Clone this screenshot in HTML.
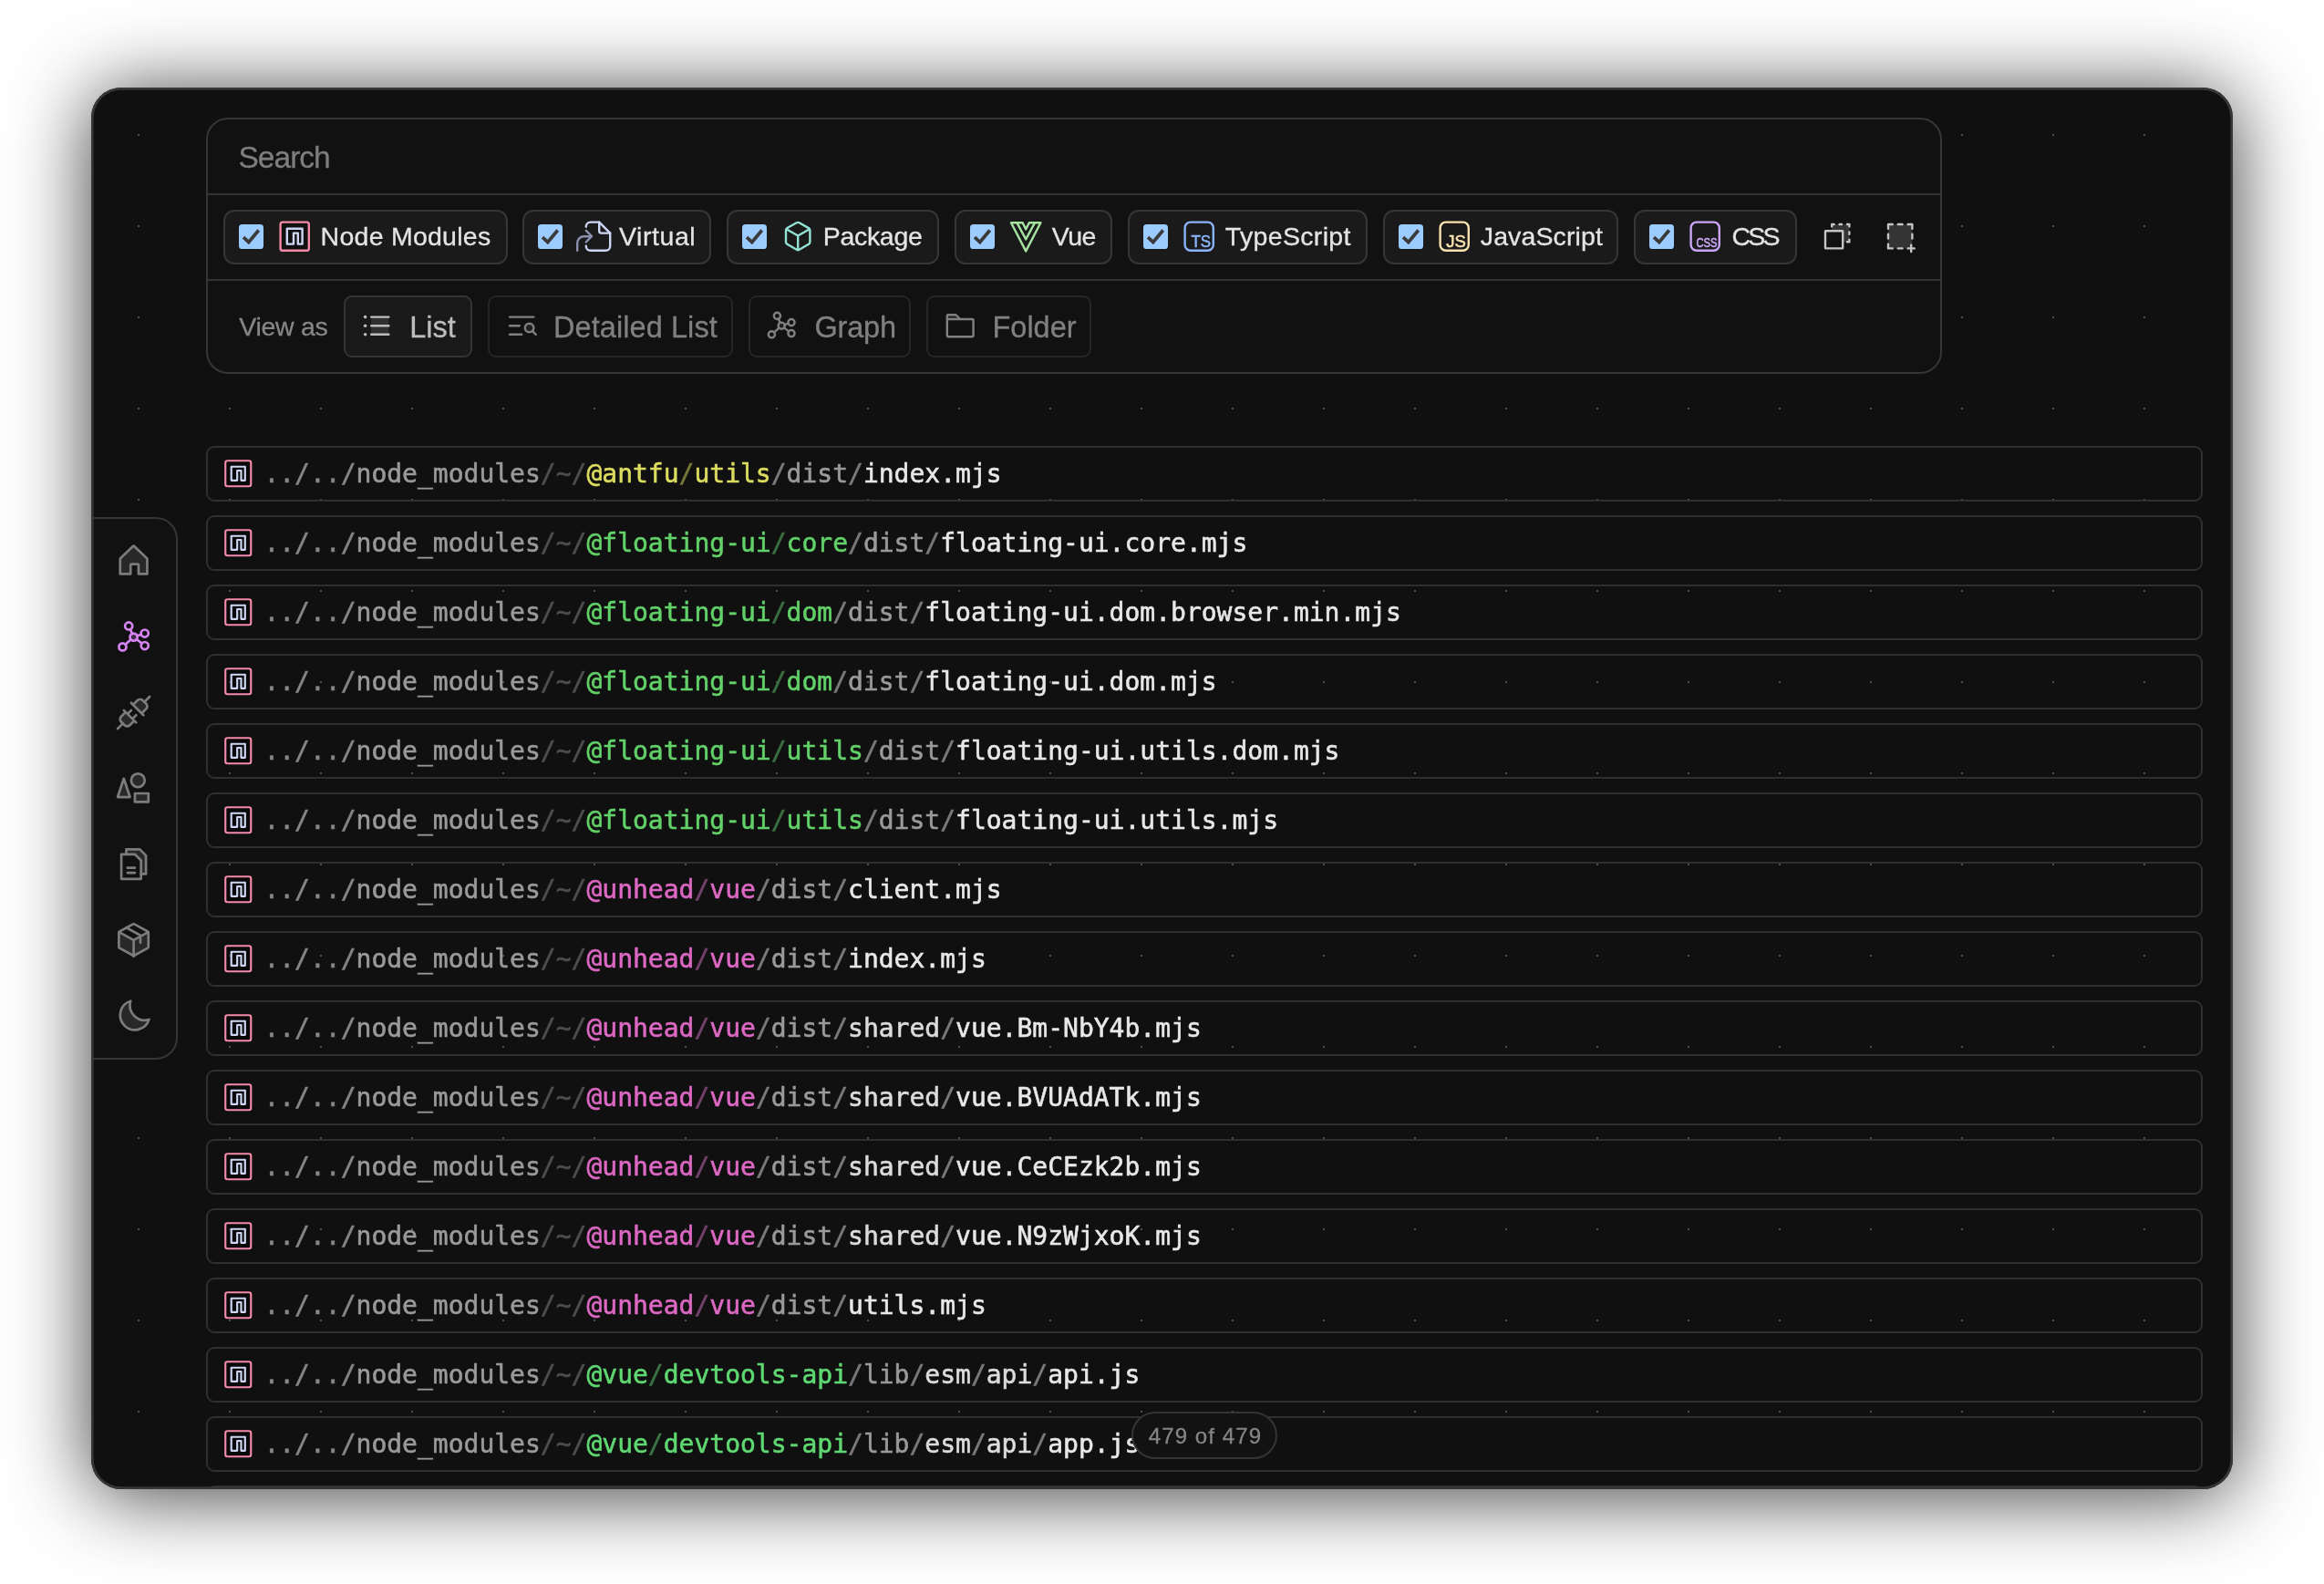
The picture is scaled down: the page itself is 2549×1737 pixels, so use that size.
<!DOCTYPE html>
<html lang="en"><head><meta charset="utf-8"><title>Vite DevTools - Modules</title>
<style>
*{box-sizing:border-box;margin:0;padding:0}
html,body{width:2549px;height:1737px;background:#fff}
body{overflow:hidden}
body{position:relative;font-family:"Liberation Sans",sans-serif;color:#d4d4d4}
.abs,.win>*,.abs>*{position:absolute}
.win{position:absolute;left:100px;top:96px;width:2349px;height:1537px;border-radius:33px;background:#101010;
 box-shadow:0 6px 88px rgba(0,0,0,.78);overflow:hidden;will-change:transform}
.winb{position:absolute;left:100px;top:96px;width:2349px;height:1537px;border-radius:33px;box-shadow:inset 0 0 0 2.7px #363636;pointer-events:none}
.dots{left:0;top:0}
.row{left:126px;width:2190px;height:61px;border:2px solid #2f2f2f;border-radius:9px}
.mono{font-family:"DejaVu Sans Mono","Liberation Mono",monospace;font-size:28px;line-height:40px;white-space:pre;letter-spacing:0}
.t{position:absolute;white-space:pre;-webkit-text-stroke:.3px}
.t.mono{-webkit-text-stroke:.55px}
.ic{position:absolute;display:block;overflow:visible}
.c1{color:#868686}.c2{color:#9a9a9a}.c3{color:#4e4e4e}.c4{color:#7a7a7a}.cw{color:#e8e8e8}.cs{color:#dcdcdc}
.py{color:#dcdc60}.pyd{color:#77773a}
.pg{color:#62d169}.pgd{color:#3a7040}
.pp{color:#dd68c4}.ppd{color:#75406a}
.pv{color:#5fd872}.pvd{color:#3a7444}
.panel{left:126px;top:33px;width:1904px;height:281px;border:2px solid #363636;border-radius:24px;background:#111111}
.hr{left:128px;width:1900px;height:2px;background:#323232}
.chip{top:134px;height:60px;border:2px solid #363636;border-radius:12px;background:#1a1a1a}
.cb{width:27px;height:27px;border-radius:3.6px;background:#9ccbff}
.lbl{font-size:28.5px;line-height:40px;color:#e6e6e6}
.vb{top:228px;height:68px;border:2px solid #262626;border-radius:9px}
.vb.on{border-color:#343434;background:#191919}
.vt{font-size:32px;line-height:44px;color:#858585}
.side{left:-2px;top:471px;width:97px;height:595px;border:2px solid #363636;border-radius:0 24px 24px 0;background:#111111}
.pill{left:1141px;top:1451.5px;width:160px;height:52px;border:2px solid #343434;border-radius:26px;background:#121212}
</style></head><body>
<div class="win">

<svg class="dots" width="2349" height="1537"><defs><pattern id="dp" x="51" y="51" width="100" height="100" patternUnits="userSpaceOnUse"><rect width="2" height="2" fill="#505050"/></pattern></defs><rect width="2349" height="1537" fill="url(#dp)"/></svg>
<div class="row" style="top:1533px"></div>
<div class="row" style="top:393px">
<svg class="ic" style="left:16.1px;top:11.2px" width="34.5" height="34.5" viewBox="0 0 16 16" fill="none" stroke-linecap="round" stroke-linejoin="round"><rect x="1.5" y="1.5" width="13" height="13" rx="1" stroke="#f38ba8" fill="#000" fill-opacity=".4"/><path stroke="#cdd6f4" d="M4.5 11.5v-7h7v7h-2v-5h-2v5z"/></svg>
<div class="t mono" style="left:61.4px;top:8.6px"><span class="c1">../../</span><span class="c2">node_modules</span><span class="c3">/~/</span><span class="py">@antfu</span><span class="pyd">/</span><span class="py">utils</span><span class="c4">/</span><span class="c2">dist</span><span class="c4">/</span><span class="cw">index.mjs</span></div>
</div>
<div class="row" style="top:469px">
<svg class="ic" style="left:16.1px;top:11.2px" width="34.5" height="34.5" viewBox="0 0 16 16" fill="none" stroke-linecap="round" stroke-linejoin="round"><rect x="1.5" y="1.5" width="13" height="13" rx="1" stroke="#f38ba8" fill="#000" fill-opacity=".4"/><path stroke="#cdd6f4" d="M4.5 11.5v-7h7v7h-2v-5h-2v5z"/></svg>
<div class="t mono" style="left:61.4px;top:8.6px"><span class="c1">../../</span><span class="c2">node_modules</span><span class="c3">/~/</span><span class="pg">@floating-ui</span><span class="pgd">/</span><span class="pg">core</span><span class="c4">/</span><span class="c2">dist</span><span class="c4">/</span><span class="cw">floating-ui.core.mjs</span></div>
</div>
<div class="row" style="top:545px">
<svg class="ic" style="left:16.1px;top:11.2px" width="34.5" height="34.5" viewBox="0 0 16 16" fill="none" stroke-linecap="round" stroke-linejoin="round"><rect x="1.5" y="1.5" width="13" height="13" rx="1" stroke="#f38ba8" fill="#000" fill-opacity=".4"/><path stroke="#cdd6f4" d="M4.5 11.5v-7h7v7h-2v-5h-2v5z"/></svg>
<div class="t mono" style="left:61.4px;top:8.6px"><span class="c1">../../</span><span class="c2">node_modules</span><span class="c3">/~/</span><span class="pg">@floating-ui</span><span class="pgd">/</span><span class="pg">dom</span><span class="c4">/</span><span class="c2">dist</span><span class="c4">/</span><span class="cw">floating-ui.dom.browser.min.mjs</span></div>
</div>
<div class="row" style="top:621px">
<svg class="ic" style="left:16.1px;top:11.2px" width="34.5" height="34.5" viewBox="0 0 16 16" fill="none" stroke-linecap="round" stroke-linejoin="round"><rect x="1.5" y="1.5" width="13" height="13" rx="1" stroke="#f38ba8" fill="#000" fill-opacity=".4"/><path stroke="#cdd6f4" d="M4.5 11.5v-7h7v7h-2v-5h-2v5z"/></svg>
<div class="t mono" style="left:61.4px;top:8.6px"><span class="c1">../../</span><span class="c2">node_modules</span><span class="c3">/~/</span><span class="pg">@floating-ui</span><span class="pgd">/</span><span class="pg">dom</span><span class="c4">/</span><span class="c2">dist</span><span class="c4">/</span><span class="cw">floating-ui.dom.mjs</span></div>
</div>
<div class="row" style="top:697px">
<svg class="ic" style="left:16.1px;top:11.2px" width="34.5" height="34.5" viewBox="0 0 16 16" fill="none" stroke-linecap="round" stroke-linejoin="round"><rect x="1.5" y="1.5" width="13" height="13" rx="1" stroke="#f38ba8" fill="#000" fill-opacity=".4"/><path stroke="#cdd6f4" d="M4.5 11.5v-7h7v7h-2v-5h-2v5z"/></svg>
<div class="t mono" style="left:61.4px;top:8.6px"><span class="c1">../../</span><span class="c2">node_modules</span><span class="c3">/~/</span><span class="pg">@floating-ui</span><span class="pgd">/</span><span class="pg">utils</span><span class="c4">/</span><span class="c2">dist</span><span class="c4">/</span><span class="cw">floating-ui.utils.dom.mjs</span></div>
</div>
<div class="row" style="top:773px">
<svg class="ic" style="left:16.1px;top:11.2px" width="34.5" height="34.5" viewBox="0 0 16 16" fill="none" stroke-linecap="round" stroke-linejoin="round"><rect x="1.5" y="1.5" width="13" height="13" rx="1" stroke="#f38ba8" fill="#000" fill-opacity=".4"/><path stroke="#cdd6f4" d="M4.5 11.5v-7h7v7h-2v-5h-2v5z"/></svg>
<div class="t mono" style="left:61.4px;top:8.6px"><span class="c1">../../</span><span class="c2">node_modules</span><span class="c3">/~/</span><span class="pg">@floating-ui</span><span class="pgd">/</span><span class="pg">utils</span><span class="c4">/</span><span class="c2">dist</span><span class="c4">/</span><span class="cw">floating-ui.utils.mjs</span></div>
</div>
<div class="row" style="top:849px">
<svg class="ic" style="left:16.1px;top:11.2px" width="34.5" height="34.5" viewBox="0 0 16 16" fill="none" stroke-linecap="round" stroke-linejoin="round"><rect x="1.5" y="1.5" width="13" height="13" rx="1" stroke="#f38ba8" fill="#000" fill-opacity=".4"/><path stroke="#cdd6f4" d="M4.5 11.5v-7h7v7h-2v-5h-2v5z"/></svg>
<div class="t mono" style="left:61.4px;top:8.6px"><span class="c1">../../</span><span class="c2">node_modules</span><span class="c3">/~/</span><span class="pp">@unhead</span><span class="ppd">/</span><span class="pp">vue</span><span class="c4">/</span><span class="c2">dist</span><span class="c4">/</span><span class="cw">client.mjs</span></div>
</div>
<div class="row" style="top:925px">
<svg class="ic" style="left:16.1px;top:11.2px" width="34.5" height="34.5" viewBox="0 0 16 16" fill="none" stroke-linecap="round" stroke-linejoin="round"><rect x="1.5" y="1.5" width="13" height="13" rx="1" stroke="#f38ba8" fill="#000" fill-opacity=".4"/><path stroke="#cdd6f4" d="M4.5 11.5v-7h7v7h-2v-5h-2v5z"/></svg>
<div class="t mono" style="left:61.4px;top:8.6px"><span class="c1">../../</span><span class="c2">node_modules</span><span class="c3">/~/</span><span class="pp">@unhead</span><span class="ppd">/</span><span class="pp">vue</span><span class="c4">/</span><span class="c2">dist</span><span class="c4">/</span><span class="cw">index.mjs</span></div>
</div>
<div class="row" style="top:1001px">
<svg class="ic" style="left:16.1px;top:11.2px" width="34.5" height="34.5" viewBox="0 0 16 16" fill="none" stroke-linecap="round" stroke-linejoin="round"><rect x="1.5" y="1.5" width="13" height="13" rx="1" stroke="#f38ba8" fill="#000" fill-opacity=".4"/><path stroke="#cdd6f4" d="M4.5 11.5v-7h7v7h-2v-5h-2v5z"/></svg>
<div class="t mono" style="left:61.4px;top:8.6px"><span class="c1">../../</span><span class="c2">node_modules</span><span class="c3">/~/</span><span class="pp">@unhead</span><span class="ppd">/</span><span class="pp">vue</span><span class="c4">/</span><span class="c2">dist</span><span class="c4">/</span><span class="cs">shared</span><span class="c4">/</span><span class="cw">vue.Bm-NbY4b.mjs</span></div>
</div>
<div class="row" style="top:1077px">
<svg class="ic" style="left:16.1px;top:11.2px" width="34.5" height="34.5" viewBox="0 0 16 16" fill="none" stroke-linecap="round" stroke-linejoin="round"><rect x="1.5" y="1.5" width="13" height="13" rx="1" stroke="#f38ba8" fill="#000" fill-opacity=".4"/><path stroke="#cdd6f4" d="M4.5 11.5v-7h7v7h-2v-5h-2v5z"/></svg>
<div class="t mono" style="left:61.4px;top:8.6px"><span class="c1">../../</span><span class="c2">node_modules</span><span class="c3">/~/</span><span class="pp">@unhead</span><span class="ppd">/</span><span class="pp">vue</span><span class="c4">/</span><span class="c2">dist</span><span class="c4">/</span><span class="cs">shared</span><span class="c4">/</span><span class="cw">vue.BVUAdATk.mjs</span></div>
</div>
<div class="row" style="top:1153px">
<svg class="ic" style="left:16.1px;top:11.2px" width="34.5" height="34.5" viewBox="0 0 16 16" fill="none" stroke-linecap="round" stroke-linejoin="round"><rect x="1.5" y="1.5" width="13" height="13" rx="1" stroke="#f38ba8" fill="#000" fill-opacity=".4"/><path stroke="#cdd6f4" d="M4.5 11.5v-7h7v7h-2v-5h-2v5z"/></svg>
<div class="t mono" style="left:61.4px;top:8.6px"><span class="c1">../../</span><span class="c2">node_modules</span><span class="c3">/~/</span><span class="pp">@unhead</span><span class="ppd">/</span><span class="pp">vue</span><span class="c4">/</span><span class="c2">dist</span><span class="c4">/</span><span class="cs">shared</span><span class="c4">/</span><span class="cw">vue.CeCEzk2b.mjs</span></div>
</div>
<div class="row" style="top:1229px">
<svg class="ic" style="left:16.1px;top:11.2px" width="34.5" height="34.5" viewBox="0 0 16 16" fill="none" stroke-linecap="round" stroke-linejoin="round"><rect x="1.5" y="1.5" width="13" height="13" rx="1" stroke="#f38ba8" fill="#000" fill-opacity=".4"/><path stroke="#cdd6f4" d="M4.5 11.5v-7h7v7h-2v-5h-2v5z"/></svg>
<div class="t mono" style="left:61.4px;top:8.6px"><span class="c1">../../</span><span class="c2">node_modules</span><span class="c3">/~/</span><span class="pp">@unhead</span><span class="ppd">/</span><span class="pp">vue</span><span class="c4">/</span><span class="c2">dist</span><span class="c4">/</span><span class="cs">shared</span><span class="c4">/</span><span class="cw">vue.N9zWjxoK.mjs</span></div>
</div>
<div class="row" style="top:1305px">
<svg class="ic" style="left:16.1px;top:11.2px" width="34.5" height="34.5" viewBox="0 0 16 16" fill="none" stroke-linecap="round" stroke-linejoin="round"><rect x="1.5" y="1.5" width="13" height="13" rx="1" stroke="#f38ba8" fill="#000" fill-opacity=".4"/><path stroke="#cdd6f4" d="M4.5 11.5v-7h7v7h-2v-5h-2v5z"/></svg>
<div class="t mono" style="left:61.4px;top:8.6px"><span class="c1">../../</span><span class="c2">node_modules</span><span class="c3">/~/</span><span class="pp">@unhead</span><span class="ppd">/</span><span class="pp">vue</span><span class="c4">/</span><span class="c2">dist</span><span class="c4">/</span><span class="cw">utils.mjs</span></div>
</div>
<div class="row" style="top:1381px">
<svg class="ic" style="left:16.1px;top:11.2px" width="34.5" height="34.5" viewBox="0 0 16 16" fill="none" stroke-linecap="round" stroke-linejoin="round"><rect x="1.5" y="1.5" width="13" height="13" rx="1" stroke="#f38ba8" fill="#000" fill-opacity=".4"/><path stroke="#cdd6f4" d="M4.5 11.5v-7h7v7h-2v-5h-2v5z"/></svg>
<div class="t mono" style="left:61.4px;top:8.6px"><span class="c1">../../</span><span class="c2">node_modules</span><span class="c3">/~/</span><span class="pv">@vue</span><span class="pvd">/</span><span class="pv">devtools-api</span><span class="c4">/</span><span class="c2">lib</span><span class="c4">/</span><span class="cs">esm</span><span class="c4">/</span><span class="cs">api</span><span class="c4">/</span><span class="cw">api.js</span></div>
</div>
<div class="row" style="top:1457px">
<svg class="ic" style="left:16.1px;top:11.2px" width="34.5" height="34.5" viewBox="0 0 16 16" fill="none" stroke-linecap="round" stroke-linejoin="round"><rect x="1.5" y="1.5" width="13" height="13" rx="1" stroke="#f38ba8" fill="#000" fill-opacity=".4"/><path stroke="#cdd6f4" d="M4.5 11.5v-7h7v7h-2v-5h-2v5z"/></svg>
<div class="t mono" style="left:61.4px;top:8.6px"><span class="c1">../../</span><span class="c2">node_modules</span><span class="c3">/~/</span><span class="pv">@vue</span><span class="pvd">/</span><span class="pv">devtools-api</span><span class="c4">/</span><span class="c2">lib</span><span class="c4">/</span><span class="cs">esm</span><span class="c4">/</span><span class="cs">api</span><span class="c4">/</span><span class="cw">app.js</span></div>
</div>
<div class="panel"></div>
<div class="hr" style="top:116px"></div><div class="hr" style="top:210px"></div>
<div class="t" style="left:161.50px;top:52.79px;font-size:33.5px;line-height:47px;letter-spacing:-0.979px;color:#7e7e7e">Search</div>
<div class="chip" style="left:145.0px;width:311.5px"></div>
<div class="cb" style="left:162.30px;top:150.20px"><svg width="27" height="27" viewBox="0 0 27 27" style="position:absolute;left:0;top:0"><path d="M5 14.200 10.800 19.500 21.700 6.500" fill="none" stroke="#3a3a3a" stroke-width="3.7" stroke-linejoin="miter"/></svg></div>
<svg class="ic" style="left:204.30px;top:144.40px" width="38.4" height="38.4" viewBox="0 0 16 16" fill="none" stroke-linecap="round" stroke-linejoin="round" ><rect x="1.5" y="1.5" width="13" height="13" rx="1" stroke="#f38ba8" fill="#000" fill-opacity=".35"/><path stroke="#cdd6f4" d="M4.5 11.5v-7h7v7h-2v-5h-2v5z"/></svg>
<div class="t" style="left:251.60px;top:142.82px;font-size:28.5px;line-height:40px;letter-spacing:0.252px;color:#e4e4e4">Node Modules</div>
<div class="chip" style="left:472.6px;width:207.6px"></div>
<div class="cb" style="left:489.90px;top:150.20px"><svg width="27" height="27" viewBox="0 0 27 27" style="position:absolute;left:0;top:0"><path d="M5 14.200 10.800 19.500 21.700 6.500" fill="none" stroke="#3a3a3a" stroke-width="3.7" stroke-linejoin="miter"/></svg></div>
<svg class="ic" style="left:531.90px;top:144.40px" width="38.4" height="38.4" viewBox="0 0 16 16" fill="none" stroke-linecap="round" stroke-linejoin="round" ><path stroke="#cdd6f4" d="M4.5 3.6v-.1a2 2 0 0 1 2-2h4l5 5v6a2 2 0 0 1-2 2h-7a2 2 0 0 1-2-2v-.1"/><path stroke="#cdd6f4" d="M10.5 1.5v4a1 1 0 0 0 1 1h4"/><path stroke="#8a90ad" d="M.5 14.5v-3.5a3 3 0 0 1 3-3h3.4M4.5 5.4 7.1 8 4.5 10.6"/></svg>
<div class="t" style="left:579.00px;top:142.82px;font-size:28.5px;line-height:40px;letter-spacing:0.562px;color:#e4e4e4">Virtual</div>
<div class="chip" style="left:696.8px;width:233.4px"></div>
<div class="cb" style="left:714.10px;top:150.20px"><svg width="27" height="27" viewBox="0 0 27 27" style="position:absolute;left:0;top:0"><path d="M5 14.200 10.800 19.500 21.700 6.500" fill="none" stroke="#3a3a3a" stroke-width="3.7" stroke-linejoin="miter"/></svg></div>
<svg class="ic" style="left:756.10px;top:144.40px" width="38.4" height="38.4" viewBox="0 0 16 16" fill="none" stroke-linecap="round" stroke-linejoin="round" ><path stroke="#94e2d5" d="M7.4 1.8a1.2 1.2 0 0 1 1.2 0l4.3 2.4a1.2 1.2 0 0 1 .6 1v5.4a1.2 1.2 0 0 1-.6 1l-4.3 2.5a1.2 1.2 0 0 1-1.2 0l-4.3-2.5a1.2 1.2 0 0 1-.6-1V5.2a1.2 1.2 0 0 1 .6-1zM2.7 4.7 8 7.7l5.3-3M8 7.7v6.5"/></svg>
<div class="t" style="left:802.70px;top:142.82px;font-size:28.5px;line-height:40px;letter-spacing:-0.294px;color:#e4e4e4">Package</div>
<div class="chip" style="left:946.9px;width:173.6px"></div>
<div class="cb" style="left:964.20px;top:150.20px"><svg width="27" height="27" viewBox="0 0 27 27" style="position:absolute;left:0;top:0"><path d="M5 14.200 10.800 19.500 21.700 6.500" fill="none" stroke="#3a3a3a" stroke-width="3.7" stroke-linejoin="miter"/></svg></div>
<svg class="ic" style="left:1006.20px;top:144.40px" width="38.4" height="38.4" viewBox="0 0 16 16" fill="none" stroke-linecap="round" stroke-linejoin="round" ><path stroke="#a6e3a1" d="M1.25 1.75H6.5L8 4.75l1.5-3h5.25L8 14.75z"/><path stroke="#a6e3a1" d="M4 1.95 8 9.35l4-7.4"/></svg>
<div class="t" style="left:1053.80px;top:142.82px;font-size:28.5px;line-height:40px;letter-spacing:-0.495px;color:#e4e4e4">Vue</div>
<div class="chip" style="left:1136.9px;width:263.3px"></div>
<div class="cb" style="left:1154.20px;top:150.20px"><svg width="27" height="27" viewBox="0 0 27 27" style="position:absolute;left:0;top:0"><path d="M5 14.200 10.800 19.500 21.700 6.500" fill="none" stroke="#3a3a3a" stroke-width="3.7" stroke-linejoin="miter"/></svg></div>
<svg class="ic" style="left:1196.20px;top:144.40px" width="38.4" height="38.4" viewBox="0 0 16 16" fill="none" stroke-linecap="round" stroke-linejoin="round" ><rect x="1.5" y="1.5" width="13" height="13" rx="2.6" stroke="#89b4fa"/><text x="8.85" y="12.85" text-anchor="middle" font-family="Liberation Sans, sans-serif" font-size="7.9" textLength="9.0" lengthAdjust="spacingAndGlyphs" fill="#89b4fa" stroke="#89b4fa" stroke-width=".25">TS</text></svg>
<div class="t" style="left:1243.80px;top:142.82px;font-size:28.5px;line-height:40px;letter-spacing:0.338px;color:#e4e4e4">TypeScript</div>
<div class="chip" style="left:1416.9px;width:258.6px"></div>
<div class="cb" style="left:1434.20px;top:150.20px"><svg width="27" height="27" viewBox="0 0 27 27" style="position:absolute;left:0;top:0"><path d="M5 14.200 10.800 19.500 21.700 6.500" fill="none" stroke="#3a3a3a" stroke-width="3.7" stroke-linejoin="miter"/></svg></div>
<svg class="ic" style="left:1476.20px;top:144.40px" width="38.4" height="38.4" viewBox="0 0 16 16" fill="none" stroke-linecap="round" stroke-linejoin="round" ><rect x="1.5" y="1.5" width="13" height="13" rx="2.6" stroke="#f9e2af"/><text x="8.75" y="12.85" text-anchor="middle" font-family="Liberation Sans, sans-serif" font-size="7.9" textLength="9.0" lengthAdjust="spacingAndGlyphs" fill="#f9e2af" stroke="#f9e2af" stroke-width=".25">JS</text></svg>
<div class="t" style="left:1523.80px;top:142.82px;font-size:28.5px;line-height:40px;letter-spacing:0.112px;color:#e4e4e4">JavaScript</div>
<div class="chip" style="left:1691.6px;width:179.7px"></div>
<div class="cb" style="left:1708.90px;top:150.20px"><svg width="27" height="27" viewBox="0 0 27 27" style="position:absolute;left:0;top:0"><path d="M5 14.200 10.800 19.500 21.700 6.500" fill="none" stroke="#3a3a3a" stroke-width="3.7" stroke-linejoin="miter"/></svg></div>
<svg class="ic" style="left:1750.90px;top:144.40px" width="38.4" height="38.4" viewBox="0 0 16 16" fill="none" stroke-linecap="round" stroke-linejoin="round" ><rect x="1.5" y="1.5" width="13" height="13" rx="2.6" stroke="#cba6f7"/><text x="8.75" y="12.85" text-anchor="middle" font-family="Liberation Sans, sans-serif" font-size="6.4" textLength="9.6" lengthAdjust="spacingAndGlyphs" fill="#cba6f7" stroke="#cba6f7" stroke-width=".25">CSS</text></svg>
<div class="t" style="left:1799.40px;top:142.82px;font-size:28.5px;line-height:40px;letter-spacing:-2.684px;color:#e4e4e4">CSS</div>
<svg class="ic" style="left:1895.50px;top:144.40px" width="38.4" height="38.4" viewBox="0 0 256 256" fill="none" stroke-linecap="round" stroke-linejoin="round" ><rect fill="#c4c4c4" fill-opacity="0.2" stroke="none" x="88" y="40" width="128" height="128"/><g stroke="#c4c4c4" stroke-width="16"><rect x="40" y="88" width="128" height="128" rx="2" fill="#111"/><path d="M144 40h16M200 40h16v16M216 96v16M216 152v16h-16M88 56V40h16"/></g></svg>
<svg class="ic" style="left:1965.20px;top:144.40px" width="38.4" height="38.4" viewBox="0 0 256 256" fill="none" stroke-linecap="round" stroke-linejoin="round" ><rect fill="#c4c4c4" fill-opacity="0.2" stroke="none" x="40" y="40" width="176" height="176"/><g stroke="#c4c4c4" stroke-width="16"><path d="M144 40h-32M72 40H40v32M40 144v-32M72 216H40v-32M144 216h-32M216 72V40h-32M216 144v-32M184 216h48M208 192v48"/></g></svg>
<div class="t" style="left:162.30px;top:241.92px;font-size:28.5px;line-height:40px;letter-spacing:-0.304px;color:#868686">View as</div>
<div class="vb on" style="left:277.0px;width:141.4px"></div>
<svg class="ic" style="left:294.40px;top:242.30px" width="38.4" height="38.4" viewBox="0 0 256 256" fill="none" stroke-linecap="round" stroke-linejoin="round" ><rect fill="#bdbdbd" fill-opacity="0.14" stroke="none" x="88" y="64" width="128" height="128"/><g stroke="#bdbdbd" stroke-width="16"><path d="M88 64h128M88 128h128M88 192h128"/></g><g fill="#bdbdbd" stroke="none"><circle cx="44" cy="64" r="12"/><circle cx="44" cy="128" r="12"/><circle cx="44" cy="192" r="12"/></g></svg>
<div class="t" style="left:349.20px;top:239.74px;font-size:32.5px;line-height:46px;letter-spacing:-0.013px;color:#bdbdbd">List</div>
<div class="vb" style="left:435.1px;width:268.9px"></div>
<svg class="ic" style="left:452.50px;top:242.30px" width="38.4" height="38.4" viewBox="0 0 256 256" fill="none" stroke-linecap="round" stroke-linejoin="round" ><circle fill="#808080" fill-opacity="0.14" stroke="none" cx="184" cy="144" r="32"/><g stroke="#808080" stroke-width="16"><path d="M40 64h176M40 128h72M40 192h88"/><circle cx="184" cy="144" r="32"/><path d="M207 167l25 25"/></g></svg>
<div class="t" style="left:507.00px;top:239.74px;font-size:32.5px;line-height:46px;letter-spacing:0.074px;color:#808080">Detailed List</div>
<div class="vb" style="left:720.8px;width:178.2px"></div>
<svg class="ic" style="left:738.20px;top:242.30px" width="38.4" height="38.4" viewBox="0 0 256 256" fill="none" stroke-linecap="round" stroke-linejoin="round" ><circle fill="#808080" fill-opacity="0.14" stroke="none" cx="128" cy="128" r="24"/><g stroke="#808080" stroke-width="16"><circle cx="128" cy="128" r="24"/><circle cx="96" cy="56" r="24"/><circle cx="200" cy="104" r="24"/><circle cx="200" cy="184" r="24"/><circle cx="56" cy="192" r="24"/><path d="M118.250 106.070 105.750 77.930M150.770 120.410 177.230 111.590M146.940 142.740 181.060 169.260M110.060 143.940 73.940 176.060"/></g></svg>
<div class="t" style="left:793.50px;top:239.74px;font-size:32.5px;line-height:46px;letter-spacing:-0.213px;color:#808080">Graph</div>
<div class="vb" style="left:916.2px;width:180.8px"></div>
<svg class="ic" style="left:933.60px;top:242.30px" width="38.4" height="38.4" viewBox="0 0 256 256" fill="none" stroke-linecap="round" stroke-linejoin="round" ><path fill="#808080" fill-opacity="0.14" stroke="none" d="M128 80 100 52a8 8 0 0 0-5-2H40a8 8 0 0 0-8 8v22z"/><g stroke="#808080" stroke-width="16"><path d="M224 88v112a8 8 0 0 1-8 8H40a8 8 0 0 1-8-8V56a8 8 0 0 1 8-8h53a8 8 0 0 1 5 2l30 30h88a8 8 0 0 1 8 8zM32 80h96"/></g></svg>
<div class="t" style="left:988.50px;top:239.74px;font-size:32.5px;line-height:46px;letter-spacing:-0.008px;color:#808080">Folder</div>
<div class="side"></div>
<svg class="ic" style="left:25.20px;top:497.30px" width="43.2" height="43.2" viewBox="0 0 256 256" fill="none" stroke-linecap="round" stroke-linejoin="round" ><path fill="#7c7c7c" fill-opacity="0.22" stroke="none" d="M40 216V116l88-84 88 84v100h-64v-64h-48v64z"/><path stroke="#7c7c7c" stroke-width="16" d="M40 216V118a6 6 0 0 1 2-4.500l82-78a6 6 0 0 1 8 0l82 78a6 6 0 0 1 2 4.500V216h-56v-58a6 6 0 0 0-6-6h-40a6 6 0 0 0-6 6v58z"/></svg>
<svg class="ic" style="left:25.20px;top:580.50px" width="43.2" height="43.2" viewBox="0 0 256 256" fill="none" stroke-linecap="round" stroke-linejoin="round" ><circle fill="#d683f2" fill-opacity="0.22" stroke="none" cx="128" cy="128" r="24"/><g stroke="#d683f2" stroke-width="16"><circle cx="128" cy="128" r="24"/><circle cx="96" cy="56" r="24"/><circle cx="200" cy="104" r="24"/><circle cx="200" cy="184" r="24"/><circle cx="56" cy="192" r="24"/><path d="M118.250 106.070 105.750 77.930M150.770 120.410 177.230 111.590M146.940 142.740 181.060 169.260M110.060 143.940 73.940 176.060"/></g></svg>
<svg class="ic" style="left:25.20px;top:663.70px" width="43.2" height="43.2" viewBox="0 0 256 256" fill="none" stroke-linecap="round" stroke-linejoin="round" ><path fill="#7c7c7c" fill-opacity="0.22" stroke="none" d="M129.7 70.3 153 47A24 24 0 0 1 187 47L209 69A24 24 0 0 1 209 103L185.7 126.3zM126.300 185.700 103 209A24 24 0 0 1 69 209L47 187A24 24 0 0 1 47 153L70.300 129.700z"/><g stroke="#7c7c7c" stroke-width="16"><path d="M129.7 70.3 153 47A24 24 0 0 1 187 47L209 69A24 24 0 0 1 209 103L185.7 126.3M126.300 185.700 103 209A24 24 0 0 1 69 209L47 187A24 24 0 0 1 47 153L70.300 129.700"/><path d="M112 64l80 80M64 112l80 80M232 24l-34 34M24 232l34-34M144 144l-24 24M112 112l-24 24"/></g></svg>
<svg class="ic" style="left:25.20px;top:746.90px" width="43.2" height="43.2" viewBox="0 0 256 256" fill="none" stroke-linecap="round" stroke-linejoin="round" ><path fill="#7c7c7c" fill-opacity="0.22" stroke="none" d="M64 64 24 184h80z"/><circle fill="#7c7c7c" fill-opacity="0.22" stroke="none" cx="156" cy="76" r="44"/><rect fill="#7c7c7c" fill-opacity="0.22" stroke="none" x="136" y="160" width="88" height="56"/><g stroke="#7c7c7c" stroke-width="16"><path d="M64 64 24 184h80z"/><circle cx="156" cy="76" r="44"/><rect x="136" y="160" width="88" height="56"/></g></svg>
<svg class="ic" style="left:25.20px;top:830.10px" width="43.2" height="43.2" viewBox="0 0 256 256" fill="none" stroke-linecap="round" stroke-linejoin="round" ><path fill="#7c7c7c" fill-opacity="0.22" stroke="none" d="M168 32H88v32h48l40 40v88h32V72z"/><g stroke="#7c7c7c" stroke-width="16"><path d="M176 224H48V64h88l40 40z"/><path d="M80 64V32h88l40 40v120h-32"/><path d="M88 152h48M88 184h48"/></g></svg>
<svg class="ic" style="left:25.20px;top:913.30px" width="43.2" height="43.2" viewBox="0 0 256 256" fill="none" stroke-linecap="round" stroke-linejoin="round" ><path fill="#7c7c7c" fill-opacity="0.22" stroke="none" d="M128 129 34 78v104a6 6 0 0 0 3 5l91 50z"/><path fill="#7c7c7c" fill-opacity="0.22" stroke="none" d="M128 129v108l91-50a6 6 0 0 0 3-5V78z" fill-opacity="0.11"/><g stroke="#7c7c7c" stroke-width="16"><path d="M124 26.200a8 8 0 0 1 8 0l88 48.200a8 8 0 0 1 4 7v93.200a8 8 0 0 1-4 7l-88 48.200a8 8 0 0 1-8 0l-88-48.200a8 8 0 0 1-4-7V81.400a8 8 0 0 1 4-7z"/><path d="M33 77.500 128 129.500l95-52M128 129.500V236M81 49l91 50v48"/></g></svg>
<svg class="ic" style="left:25.20px;top:996.50px" width="43.2" height="43.2" viewBox="0 0 256 256" fill="none" stroke-linecap="round" stroke-linejoin="round" ><path fill="#7c7c7c" fill-opacity="0.22" stroke="none" d="M108 28A96 96 0 0 0 228 148 96 96 0 1 1 108 28z"/><path stroke="#7c7c7c" stroke-width="16" d="M108 28A96 96 0 0 0 228 148 96 96 0 1 1 108 28z"/></svg>
<div class="pill"></div><div class="t" style="left:1159.80px;top:1461.68px;font-size:24px;line-height:34px;letter-spacing:1.089px;color:#858585">479 of 479</div>
</div><div class="winb"></div></body></html>
